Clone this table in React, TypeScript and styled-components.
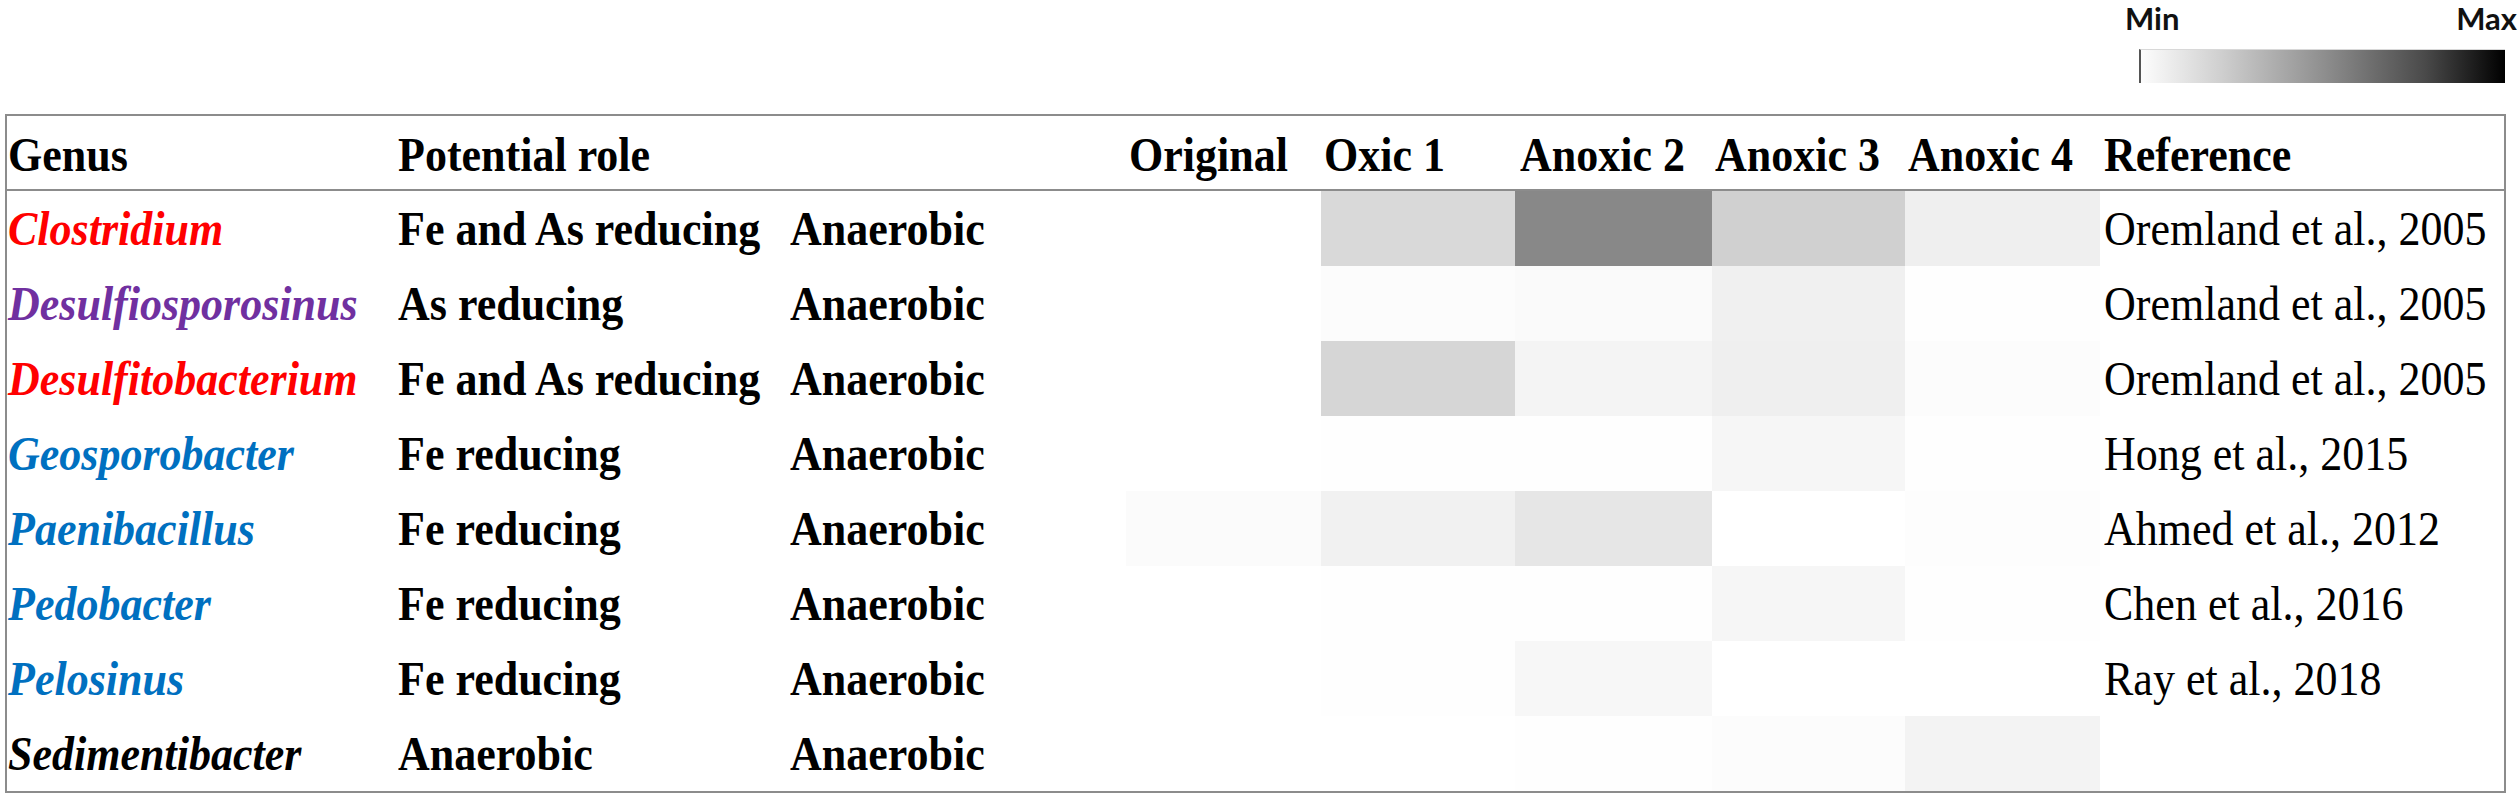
import styled, { createGlobalStyle } from 'styled-components'

const GlobalStyle = createGlobalStyle`
  html, body {
    margin: 0;
    padding: 0;
    background: #ffffff;
  }
`

type Row = {
  genus: string
  color: string
  role: string
  type: string
  heat: string[]
  ref: string
}

const rows: Row[] = [
  { genus: 'Clostridium', color: '#ff0000', role: 'Fe and As reducing', type: 'Anaerobic', heat: ['#ffffff', '#d9d9d9', '#888888', '#d0d0d0', '#efefef'], ref: 'Oremland et al., 2005' },
  { genus: 'Desulfiosporosinus', color: '#7030a0', role: 'As reducing', type: 'Anaerobic', heat: ['#ffffff', '#fcfcfc', '#fafafa', '#f0f0f0', '#fefefe'], ref: 'Oremland et al., 2005' },
  { genus: 'Desulfitobacterium', color: '#ff0000', role: 'Fe and As reducing', type: 'Anaerobic', heat: ['#ffffff', '#d6d6d6', '#f4f4f4', '#efefef', '#fcfcfc'], ref: 'Oremland et al., 2005' },
  { genus: 'Geosporobacter', color: '#0070c0', role: 'Fe reducing', type: 'Anaerobic', heat: ['#ffffff', '#fefefe', '#fefefe', '#f6f6f6', '#fefefe'], ref: 'Hong et al., 2015' },
  { genus: 'Paenibacillus', color: '#0070c0', role: 'Fe reducing', type: 'Anaerobic', heat: ['#fbfbfb', '#f1f1f1', '#e6e6e6', '#ffffff', '#fdfdfd'], ref: 'Ahmed et al., 2012' },
  { genus: 'Pedobacter', color: '#0070c0', role: 'Fe reducing', type: 'Anaerobic', heat: ['#ffffff', '#fefefe', '#fefefe', '#f6f6f6', '#fefefe'], ref: 'Chen et al., 2016' },
  { genus: 'Pelosinus', color: '#0070c0', role: 'Fe reducing', type: 'Anaerobic', heat: ['#ffffff', '#fefefe', '#f7f7f7', '#ffffff', '#ffffff'], ref: 'Ray et al., 2018' },
  { genus: 'Sedimentibacter', color: '#000000', role: 'Anaerobic', type: 'Anaerobic', heat: ['#ffffff', '#ffffff', '#fefefe', '#fcfcfc', '#f3f3f3'], ref: '' },
]

const samples = ['Original', 'Oxic 1', 'Anoxic 2', 'Anoxic 3', 'Anoxic 4']

export default function App() {
  return (
    <Page>
      <GlobalStyle />
      <LegendWrap>
        <Legend>
          <LegendLabels>
            <span>Min</span>
            <span>Max</span>
          </LegendLabels>
          <ScaleBar />
        </Legend>
      </LegendWrap>
      <Table>
        <HeadCell $pad={1}><Txt>Genus</Txt></HeadCell>
        <HeadCell><Txt>Potential role</Txt></HeadCell>
        <HeadCell />
        {samples.map((s) => (
          <HeadCell key={s} $pad={s === 'Anoxic 2' ? 5 : 3}>
            <Txt>{s}</Txt>
          </HeadCell>
        ))}
        <HeadCell $pad={4}><Txt>Reference</Txt></HeadCell>

        {rows.map((r) => (
          <Line key={r.genus}>
            <GenusCell $color={r.color}><Txt>{r.genus}</Txt></GenusCell>
            <BoldCell><Txt>{r.role}</Txt></BoldCell>
            <BoldCell><Txt>{r.type}</Txt></BoldCell>
            {r.heat.map((c, i) => (
              <HeatCell key={i} $bg={c} />
            ))}
            <RefCell><Txt>{r.ref}</Txt></RefCell>
          </Line>
        ))}
      </Table>
    </Page>
  )
}

const Page = styled.div`
  width: 2520px;
  height: 798px;
  overflow: hidden;
  font-family: 'Liberation Serif', 'Times New Roman', serif;
  color: #000;
`

const LegendWrap = styled.div`
  display: flex;
  justify-content: flex-end;
  padding-right: 3px;
`

const Legend = styled.div`
  width: 392px;
  display: flex;
  flex-direction: column;
`

const LegendLabels = styled.div`
  display: flex;
  justify-content: space-between;
  font-family: Lato, 'Open Sans', sans-serif;
  font-weight: 700;
  font-size: 31px;
  line-height: 37px;
  color: #111;
`

const ScaleBar = styled.div`
  margin: 12px 12px 31px 14px;
  height: 34px;
  box-sizing: border-box;
  border-left: 2px solid #555;
  border-top: 1px solid #d8d8d8;
  background: linear-gradient(to right, #fdfdfd 0%, #cfcfcf 22%, #8f8f8f 50%, #4a4a4a 78%, #000 100%);
`

const Table = styled.div`
  margin-left: 5px;
  width: 2501px;
  box-sizing: border-box;
  border: 2px solid #8c8c8c;
  display: grid;
  grid-template-columns: 391px 392px 336px 195px 194px 197px 193px 195px 404px;
  grid-template-rows: 75px;
  grid-auto-rows: 75px;
  font-size: 44px;
`

const Txt = styled.span`
  display: inline-block;
  transform: scaleY(1.1);
  transform-origin: 50% 60%;
`

const HeadCell = styled.div<{ $pad?: number }>`
  display: flex;
  align-items: center;
  padding-left: ${(p) => p.$pad ?? 0}px;
  padding-top: 6px;
  box-sizing: border-box;
  border-bottom: 2px solid #8c8c8c;
  font-weight: 700;
  white-space: nowrap;
`

const Line = styled.div`
  display: contents;
`

const BodyCell = styled.div`
  display: flex;
  align-items: center;
  padding-top: 2px;
  box-sizing: border-box;
  white-space: nowrap;
`

const GenusCell = styled(BodyCell)<{ $color: string }>`
  padding-left: 1px;
  font-weight: 700;
  font-style: italic;
  color: ${(p) => p.$color};
`

const BoldCell = styled(BodyCell)`
  font-weight: 700;
`

const HeatCell = styled.div<{ $bg: string }>`
  background: ${(p) => p.$bg};
`

const RefCell = styled(BodyCell)`
  padding-left: 4px;
`
